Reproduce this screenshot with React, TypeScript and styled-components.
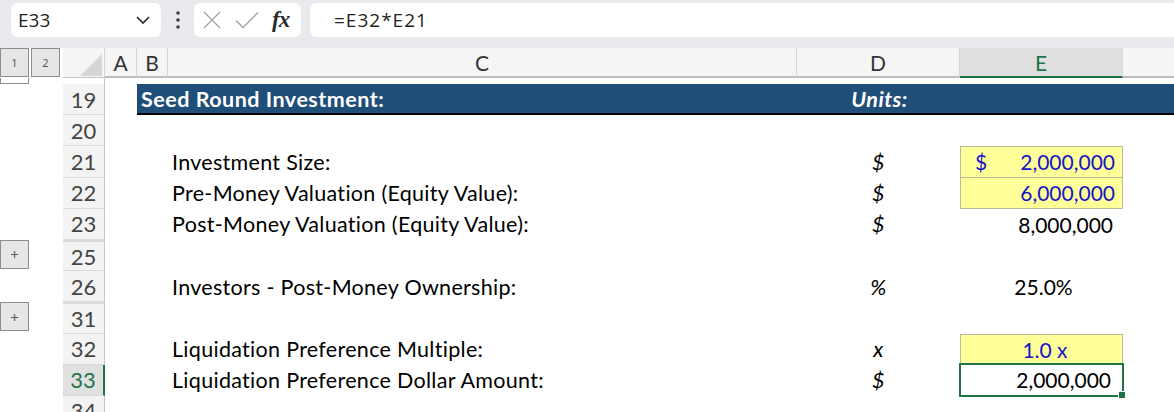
import styled, { createGlobalStyle, css } from 'styled-components';

const GlobalStyle = createGlobalStyle`
  html, body {
    margin: 0;
    padding: 0;
    background: #ffffff;
    overflow: hidden;
  }
  body {
    font-family: Lato, "Liberation Sans", sans-serif;
  }
`;

const GRID_COLS = '63px 42px 32px 31px 629px 163px 163px 1fr';
const ROW_H = 31.2;
const GREEN = '#217346';

type SheetRow = {
  n: number;
  title?: boolean;
  label?: string;
  unit?: string;
  value?: string;
  input?: boolean;
  joinTop?: boolean;
  dollar?: boolean;
  center?: boolean;
  selected?: boolean;
  hiddenBefore?: boolean;
  expand?: boolean;
};

const rows: SheetRow[] = [
  { n: 19, title: true },
  { n: 20 },
  { n: 21, label: 'Investment Size:', unit: '$', value: '2,000,000', input: true, dollar: true },
  { n: 22, label: 'Pre-Money Valuation (Equity Value):', unit: '$', value: '6,000,000', input: true, joinTop: true },
  { n: 23, label: 'Post-Money Valuation (Equity Value):', unit: '$', value: '8,000,000' },
  { n: 25, hiddenBefore: true, expand: true },
  { n: 26, label: 'Investors - Post-Money Ownership:', unit: '%', value: '25.0%', center: true },
  { n: 31, hiddenBefore: true, expand: true },
  { n: 32, label: 'Liquidation Preference Multiple:', unit: 'x', value: '1.0 x', input: true, center: true },
  { n: 33, label: 'Liquidation Preference Dollar Amount:', unit: '$', value: '2,000,000', selected: true },
  { n: 34 },
];

/* ---------- formula bar ---------- */

const FormulaBar = styled.div`
  height: 48px;
  box-sizing: border-box;
  padding: 3px 0 11px 11px;
  background: #e8eaed;
  display: flex;
  align-items: stretch;
`;

const Field = styled.div<{ $w?: number; $grow?: boolean }>`
  background: #ffffff;
  border-radius: 6px;
  display: flex;
  align-items: center;
  box-sizing: border-box;
  flex-shrink: 0;
  ${(p) => (p.$w ? `width: ${p.$w}px;` : '')}
  ${(p) => (p.$grow ? 'flex: 1; border-radius: 6px 0 0 6px;' : '')}
  font-family: "Open Sans", "Noto Sans", sans-serif;
  font-size: 19px;
  color: #1f1f1f;
`;

const NameText = styled.span`
  flex: 1;
  padding-left: 7px;
`;

const ChevronWrap = styled.span`
  display: flex;
  padding-right: 10px;
`;

const Dots = styled.div`
  width: 33px;
  flex-shrink: 0;
  display: flex;
  align-items: center;
  justify-content: center;
`;

const FuncBox = styled(Field)`
  width: 107px;
  padding-left: 8px;
  margin-right: 9px;
`;

const IconSlot = styled.span<{ $gap: number }>`
  display: flex;
  margin-right: ${(p) => p.$gap}px;
`;

const Fx = styled.span`
  font-family: "Liberation Serif", "DejaVu Serif", serif;
  font-style: italic;
  font-weight: bold;
  font-size: 23px;
  color: #2b2b2b;
  letter-spacing: -1px;
`;

const FormulaText = styled.span`
  padding-left: 24px;
  letter-spacing: 1px;
`;

/* ---------- sheet ---------- */

const Sheet = styled.div`
  display: flex;
  flex-direction: column;
`;

const Row = styled.div<{ $h: number }>`
  display: grid;
  grid-template-columns: ${GRID_COLS};
  height: ${(p) => p.$h}px;
`;

const OutlineCell = styled.div`
  display: flex;
  align-items: flex-start;
  gap: 2px;
`;

const OutlineBtn = styled.div<{ $big?: boolean }>`
  width: 29px;
  height: 29px;
  box-sizing: border-box;
  border: 1px solid #8d8d8d;
  background: #e6e6e6;
  display: flex;
  align-items: center;
  justify-content: center;
  font-family: "Noto Sans", sans-serif;
  font-size: ${(p) => (p.$big ? '15px' : '11px')};
  color: #5a5a5a;
`;

const OutlineTail = styled.div`
  width: 29px;
  height: 6px;
  box-sizing: border-box;
  border: 1px solid #8d8d8d;
  border-top: none;
`;

const Corner = styled.div`
  background: #f5f5f5;
  border-bottom: 1px solid #c4c4c4;
  border-right: 1px solid #d6d6d6;
  display: flex;
  align-items: flex-end;
  justify-content: flex-end;
  padding: 0 2px 1px 0;
`;

const Triangle = styled.div`
  width: 22px;
  height: 22px;
  background: #d6d6d6;
  clip-path: polygon(100% 0, 100% 100%, 0 100%);
`;

const ColHead = styled.div<{ $active?: boolean; $last?: boolean }>`
  background: ${(p) => (p.$active ? '#e0e0e0' : '#f5f5f5')};
  border-right: ${(p) => (p.$last ? 'none' : '1px solid #d6d6d6')};
  border-bottom: ${(p) => (p.$active ? `2px solid ${GREEN}` : '2px solid #bdbdbd')};
  display: flex;
  align-items: center;
  justify-content: center;
  font-size: 21px;
  color: ${(p) => (p.$active ? GREEN : '#333')};
`;

const RowHead = styled.div<{ $active?: boolean; $gapAbove?: boolean }>`
  background: ${(p) => (p.$active ? '#e0e0e0' : '#f3f3f3')};
  border-bottom: 1px solid #dadada;
  border-right: ${(p) => (p.$active ? `2px solid ${GREEN}` : '1px solid #c6c6c6')};
  ${(p) => p.$gapAbove && 'border-top: 2px solid #dadada;'}
  box-sizing: border-box;
  display: flex;
  align-items: center;
  justify-content: center;
  font-size: 22px;
  color: ${(p) => (p.$active ? GREEN : '#444')};
`;

const BlankHead = styled.div`
  background: #ffffff;
  border-right: 1px solid #c6c6c6;
`;

const Cell = styled.div<{ $align?: 'left' | 'center' | 'right' }>`
  display: flex;
  align-items: center;
  justify-content: ${(p) =>
    p.$align === 'center' ? 'center' : p.$align === 'right' ? 'flex-end' : 'flex-start'};
  font-size: 21.5px;
  letter-spacing: 0.3px;
  color: #000;
  white-space: nowrap;
  min-width: 0;
`;

const TitleCell = styled(Cell)<{ $span?: number }>`
  background: #1f4e79;
  border-bottom: 2px solid #000;
  color: #ffffff;
  font-weight: bold;
  letter-spacing: 0.5px;
  ${(p) => p.$span && `grid-column: span ${p.$span};`}
`;

const TitleText = styled.span`
  padding-left: 4px;
`;

const UnitsText = styled.span`
  font-style: italic;
  padding-left: 2px;
`;

const Label = styled(Cell)`
  padding-left: 4px;
  overflow: visible;
`;

const Unit = styled(Cell)`
  font-style: italic;
`;

const ValueCell = styled(Cell)<{
  $input?: boolean;
  $joinTop?: boolean;
  $selected?: boolean;
  $center?: boolean;
}>`
  position: relative;
  box-sizing: border-box;
  font-size: 21px;
  letter-spacing: 0;
  justify-content: ${(p) => (p.$center ? 'center' : 'space-between')};
  padding: 0 10px 0 14px;
  ${(p) =>
    p.$input &&
    css`
      background: #ffff99;
      color: #1616c8;
      border: 1px solid #b9b9a0;
      ${p.$joinTop && 'border-top: none;'}
      padding-right: 7px;
    `}
  ${(p) =>
    p.$selected &&
    css`
      border: 2px solid ${GREEN};
      margin: -2px -1px -1px -1px;
      padding-right: 11px;
    `}
`;

const Handle = styled.div`
  position: absolute;
  right: -4px;
  bottom: -4px;
  width: 6px;
  height: 6px;
  background: ${GREEN};
  border: 1px solid #ffffff;
`;

const XIcon = () => (
  <svg width="20" height="20" viewBox="0 0 20 20" fill="none" stroke="#a6a6a6" strokeWidth="1.4">
    <path d="M2 2 L18 18 M18 2 L2 18" />
  </svg>
);

const CheckIcon = () => (
  <svg width="24" height="18" viewBox="0 0 24 18" fill="none" stroke="#a6a6a6" strokeWidth="1.4">
    <path d="M1 9.5 L8 16.5 L23 1.5" />
  </svg>
);

const Chevron = () => (
  <svg width="16" height="10" viewBox="0 0 16 10" fill="none" stroke="#2a2a2a" strokeWidth="1.6">
    <path d="M2 2 L8 8 L14 2" />
  </svg>
);

const VDots = () => (
  <svg width="6" height="20" viewBox="0 0 6 20" fill="#3a3a3a">
    <circle cx="3" cy="3" r="1.8" />
    <circle cx="3" cy="10" r="1.8" />
    <circle cx="3" cy="17" r="1.8" />
  </svg>
);

const columns = ['A', 'B', 'C', 'D', 'E', ''];

export default function App() {
  return (
    <>
      <GlobalStyle />
      <FormulaBar>
        <Field $w={150}>
          <NameText>E33</NameText>
          <ChevronWrap>
            <Chevron />
          </ChevronWrap>
        </Field>
        <Dots>
          <VDots />
        </Dots>
        <FuncBox>
          <IconSlot $gap={13}>
            <XIcon />
          </IconSlot>
          <IconSlot $gap={13}>
            <CheckIcon />
          </IconSlot>
          <Fx>fx</Fx>
        </FuncBox>
        <Field $grow>
          <FormulaText>=E32*E21</FormulaText>
        </Field>
      </FormulaBar>

      <Sheet>
        <Row $h={30}>
          <OutlineCell>
            <OutlineBtn>1</OutlineBtn>
            <OutlineBtn>2</OutlineBtn>
          </OutlineCell>
          <Corner>
            <Triangle />
          </Corner>
          {columns.map((c, i) => (
            <ColHead key={i} $active={c === 'E'} $last={i === columns.length - 1}>
              {c}
            </ColHead>
          ))}
        </Row>

        <Row $h={6}>
          <OutlineCell>
            <OutlineTail />
          </OutlineCell>
          <BlankHead />
        </Row>

        {rows.map((r) => (
          <Row key={r.n} $h={ROW_H}>
            <OutlineCell>{r.expand && <OutlineBtn $big>+</OutlineBtn>}</OutlineCell>
            <RowHead $active={r.selected} $gapAbove={r.hiddenBefore}>
              {r.n}
            </RowHead>
            <Cell />
            {r.title ? (
              <>
                <TitleCell $span={2}>
                  <TitleText>Seed Round Investment:</TitleText>
                </TitleCell>
                <TitleCell $align="center">
                  <UnitsText>Units:</UnitsText>
                </TitleCell>
                <TitleCell />
                <TitleCell />
              </>
            ) : (
              <>
                <Cell />
                <Label>{r.label}</Label>
                <Unit $align="center">{r.unit}</Unit>
                {r.value ? (
                  <ValueCell
                    $input={r.input}
                    $joinTop={r.joinTop}
                    $selected={r.selected}
                    $center={r.center}
                  >
                    {!r.center && <span>{r.dollar ? '$' : ''}</span>}
                    <span>{r.value}</span>
                    {r.selected && <Handle />}
                  </ValueCell>
                ) : (
                  <Cell />
                )}
                <Cell />
              </>
            )}
          </Row>
        ))}
      </Sheet>
    </>
  );
}
